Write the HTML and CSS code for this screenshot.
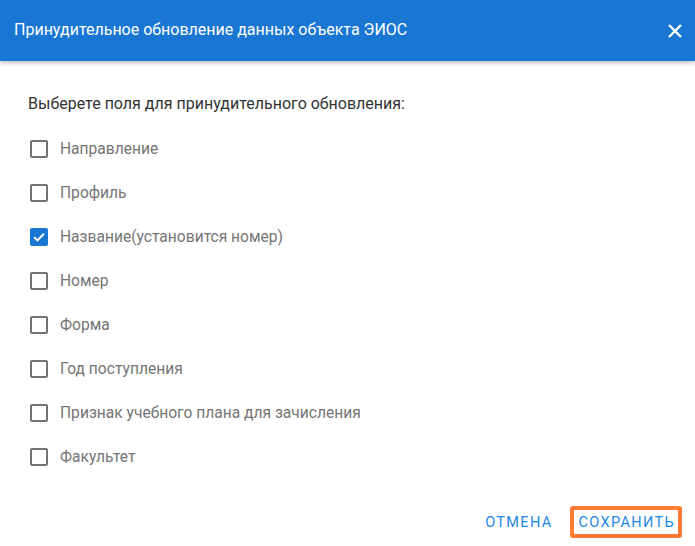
FILE: index.html
```html
<!DOCTYPE html>
<html lang="ru">
  <head>
    <meta charset="UTF-8" />
    <title>Принудительное обновление</title>
    <link rel="stylesheet" href="styles.css">
  </head>
  <body>
    <div class="dialog">
      <header class="dialog-header">
        <h1>Принудительное обновление данных объекта ЭИОС</h1>
        <button class="close" aria-label="Закрыть">
          <svg width="14" height="14" viewBox="0 0 14 14">
            <path d="M1 1 L13 13 M13 1 L1 13" stroke="#fff" stroke-width="2.4" />
          </svg>
        </button>
      </header>
      <div class="dialog-body">
        <p class="question">Выберете поля для принудительного обновления:</p>
        <ul class="fields">
          <li><span class="box"></span>Направление</li>
          <li><span class="box"></span>Профиль</li>
          <li>
            <span class="box checked">
              <svg width="14" height="14" viewBox="0 0 14 14">
                <path d="M2.2 7.2 L5.5 10.4 L11.8 3.8" fill="none" stroke="#fff" stroke-width="2" />
              </svg>
            </span>Название(установится номер)
          </li>
          <li><span class="box"></span>Номер</li>
          <li><span class="box"></span>Форма</li>
          <li><span class="box"></span>Год поступления</li>
          <li><span class="box"></span>Признак учебного плана для зачисления</li>
          <li><span class="box"></span>Факультет</li>
        </ul>
      </div>
      <footer class="dialog-actions">
        <button class="btn">Отмена</button>
        <button class="btn btn-save">Сохранить</button>
      </footer>
    </div>
  </body>
</html>
```

FILE: styles.css
```css
body {
  margin: 0;
  font-family: Roboto, "Liberation Sans", sans-serif;
  background: #fff;
}
.dialog {
  width: 695px;
  height: 546px;
  display: flex;
  flex-direction: column;
}
.dialog-header {
  height: 61px;
  background: #1976d2;
  display: flex;
  align-items: center;
  justify-content: space-between;
  padding: 0 13px 0 14px;
  box-shadow: 0 2px 4px rgba(0, 0, 0, 0.25);
  box-sizing: border-box;
}
.dialog-header h1 {
  margin: 0;
  color: #fff;
  font-size: 16px;
  font-weight: 400;
  padding-bottom: 2px;
}
.close {
  background: none;
  border: none;
  padding: 0;
  width: 14px;
  height: 14px;
  display: flex;
}
.dialog-body {
  flex: 1;
  padding: 0 28px;
}
.question {
  margin: 33px 0 0;
  font-size: 16px;
  line-height: 20px;
  color: #333;
}
.fields {
  list-style: none;
  margin: 13px 0 0;
  padding: 0;
}
.fields li {
  height: 44px;
  display: flex;
  align-items: center;
  font-size: 15.6px;
  color: #757575;
}
.box {
  width: 18px;
  height: 18px;
  box-sizing: border-box;
  border: 2px solid #737373;
  border-radius: 2px;
  margin: 0 12px 0 2px;
  display: flex;
  align-items: center;
  justify-content: center;
}
.box.checked {
  background: #1976d2;
  border-color: #1976d2;
}
.dialog-actions {
  display: flex;
  justify-content: flex-end;
  align-items: center;
  gap: 17px;
  padding: 0 13px 8px 0;
}
.btn {
  font-family: Roboto, "Liberation Sans", sans-serif;
  background: none;
  border: none;
  color: #1e88e5;
  font-size: 14.5px;
  letter-spacing: 1.35px;
  text-transform: uppercase;
  padding: 0;
  height: 32px;
}
.btn-save {
  border: 4px solid #ff7a35;
  border-radius: 3px;
  padding: 0 3px 0 5px;
}
```
